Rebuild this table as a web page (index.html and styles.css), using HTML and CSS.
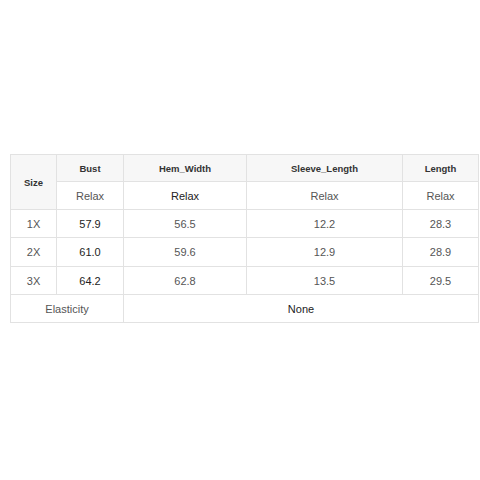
FILE: index.html
```html
<!DOCTYPE html>
<html>
<head>
<meta charset="utf-8">
<link rel="stylesheet" href="styles.css">
</head>
<body>
<div class="page">
<table class="size-table">
  <colgroup>
    <col class="c1"><col class="c2"><col class="c3"><col class="c4"><col class="c5">
  </colgroup>
  <tr class="r-head">
    <th rowspan="2" class="hd">Size</th>
    <th class="hd">Bust</th>
    <th class="hd">Hem_Width</th>
    <th class="hd">Sleeve_Length</th>
    <th class="hd">Length</th>
  </tr>
  <tr class="r-sub">
    <td class="muted">Relax</td>
    <td class="dark">Relax</td>
    <td class="muted">Relax</td>
    <td class="muted">Relax</td>
  </tr>
  <tr class="r-data">
    <td class="muted">1X</td><td class="dark">57.9</td><td class="muted">56.5</td><td class="muted">12.2</td><td class="muted">28.3</td>
  </tr>
  <tr class="r-data r-tall">
    <td class="muted">2X</td><td class="dark">61.0</td><td class="muted">59.6</td><td class="muted">12.9</td><td class="muted">28.9</td>
  </tr>
  <tr class="r-data">
    <td class="muted">3X</td><td class="dark">64.2</td><td class="muted">62.8</td><td class="muted">13.5</td><td class="muted">29.5</td>
  </tr>
  <tr class="r-data">
    <td colspan="2" class="muted">Elasticity</td>
    <td colspan="3" class="dark">None</td>
  </tr>
</table>
</div>
</body>
</html>
```
FILE: styles.css
```css
html, body {
  margin: 0;
  padding: 0;
  background: #fff;
}
.page {
  padding: 154px 0 0 10px;
}
.size-table {
  border-collapse: collapse;
  table-layout: fixed;
  width: 468px;
  font-family: "Liberation Sans", Arial, sans-serif;
  font-size: 11px;
  color: #555;
}
.c1 { width: 46px; }
.c2 { width: 67px; }
.c3 { width: 123px; }
.c4 { width: 156px; }
.c5 { width: 76px; }
.size-table th,
.size-table td {
  border: 1px solid #e2e2e2;
  text-align: center;
  vertical-align: middle;
  padding: 0;
}
.size-table th {
  background: #f7f7f7;
  font-weight: bold;
  font-size: 9.5px;
  color: #333;
}
.r-head { height: 27px; }
.r-sub { height: 28px; }
.r-data { height: 28px; }
.r-tall { height: 29px; }
.muted { color: #555; }
.dark { color: #222; }
```
